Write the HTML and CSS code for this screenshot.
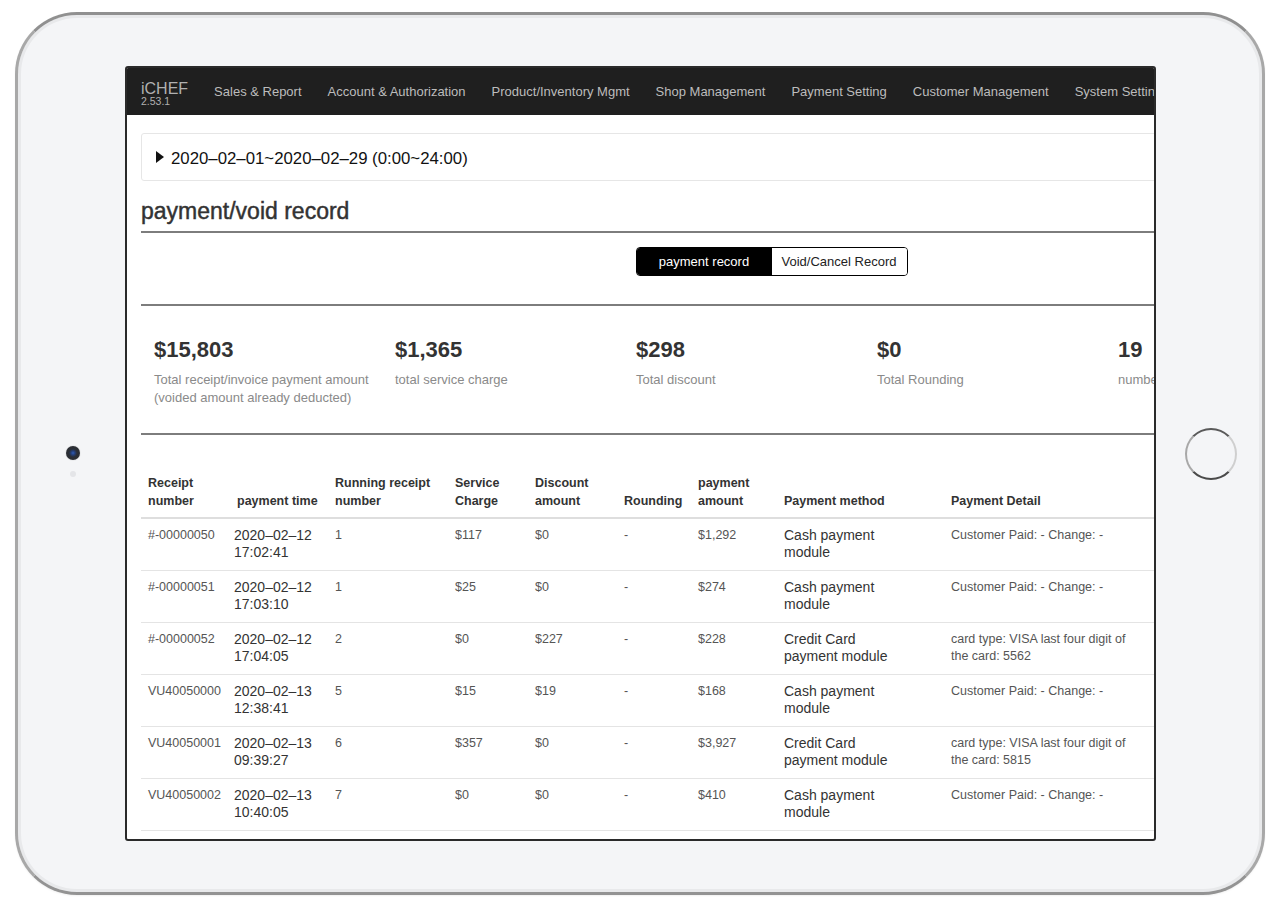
FILE: index.html
```html
<!DOCTYPE html>
<html lang="en">
<head>
<meta charset="utf-8">
<title>iCHEF - payment/void record</title>
<link rel="stylesheet" href="styles.css">
</head>
<body>
<div class="device">
  <div class="side side-left">
    <div class="camera"></div>
    <div class="sensor"></div>
  </div>
  <div class="screen">
    <nav class="topbar">
      <div class="brand"><span class="brand-name">iCHEF</span><span class="brand-ver">2.53.1</span></div>
      <span class="nav-item">Sales &amp; Report</span>
      <span class="nav-item">Account &amp; Authorization</span>
      <span class="nav-item">Product/Inventory Mgmt</span>
      <span class="nav-item">Shop Management</span>
      <span class="nav-item">Payment Setting</span>
      <span class="nav-item">Customer Management</span>
      <span class="nav-item">System Setting</span>
    </nav>
    <main class="page">
      <div class="date-box">
        <svg class="caret" width="8" height="12" viewBox="0 0 8 12"><polygon points="0,0 8,6 0,12" fill="#111"/></svg>
        <span class="date-text">2020–02–01~2020–02–29 (0:00~24:00)</span>
      </div>
      <h1 class="title">payment/void record</h1>
      <hr class="rule">
      <div class="seg-wrap">
        <div class="seg">
          <span class="seg-btn active">payment record</span>
          <span class="seg-btn">Void/Cancel Record</span>
        </div>
      </div>
      <hr class="rule rule-gap">
      <div class="stats">
        <div class="stat"><div class="stat-value">$15,803</div><div class="stat-label">Total receipt/invoice payment amount<br>(voided amount already deducted)</div></div>
        <div class="stat"><div class="stat-value">$1,365</div><div class="stat-label">total service charge</div></div>
        <div class="stat"><div class="stat-value">$298</div><div class="stat-label">Total discount</div></div>
        <div class="stat"><div class="stat-value">$0</div><div class="stat-label">Total Rounding</div></div>
        <div class="stat"><div class="stat-value">19</div><div class="stat-label">number of receipts</div></div>
      </div>
      <hr class="rule rule-stats">
      <table class="records">
        <colgroup>
          <col class="c1"><col class="c2"><col class="c3"><col class="c4"><col class="c5"><col class="c6"><col class="c7"><col class="c8"><col class="c9">
        </colgroup>
        <thead>
          <tr>
            <th>Receipt number</th>
            <th class="th-time">payment time</th>
            <th>Running receipt number</th>
            <th>Service Charge</th>
            <th>Discount amount</th>
            <th>Rounding</th>
            <th>payment amount</th>
            <th class="method">Payment method</th>
            <th class="detail">Payment Detail</th>
          </tr>
        </thead>
        <tbody>
          <tr><td>#-00000050</td><td class="time">2020–02–12 17:02:41</td><td>1</td><td>$117</td><td>$0</td><td>-</td><td>$1,292</td><td class="method">Cash payment module</td><td class="detail">Customer Paid: - Change: -</td></tr>
          <tr><td>#-00000051</td><td class="time">2020–02–12 17:03:10</td><td>1</td><td>$25</td><td>$0</td><td>-</td><td>$274</td><td class="method">Cash payment module</td><td class="detail">Customer Paid: - Change: -</td></tr>
          <tr><td>#-00000052</td><td class="time">2020–02–12 17:04:05</td><td>2</td><td>$0</td><td>$227</td><td>-</td><td>$228</td><td class="method">Credit Card payment module</td><td class="detail">card type: VISA last four digit of the card: 5562</td></tr>
          <tr><td>VU40050000</td><td class="time">2020–02–13 12:38:41</td><td>5</td><td>$15</td><td>$19</td><td>-</td><td>$168</td><td class="method">Cash payment module</td><td class="detail">Customer Paid: - Change: -</td></tr>
          <tr><td>VU40050001</td><td class="time">2020–02–13 09:39:27</td><td>6</td><td>$357</td><td>$0</td><td>-</td><td>$3,927</td><td class="method">Credit Card payment module</td><td class="detail">card type: VISA last four digit of the card: 5815</td></tr>
          <tr><td>VU40050002</td><td class="time">2020–02–13 10:40:05</td><td>7</td><td>$0</td><td>$0</td><td>-</td><td>$410</td><td class="method">Cash payment module</td><td class="detail">Customer Paid: - Change: -</td></tr>
          <tr><td>VU40050003</td><td class="time">2020–02–13 11:12:33</td><td>8</td><td>$42</td><td>$0</td><td>-</td><td>$462</td><td class="method">Cash payment module</td><td class="detail">Customer Paid: - Change: -</td></tr>
        </tbody>
      </table>
    </main>
  </div>
  <div class="side side-right">
    <div class="home"></div>
  </div>
</div>
</body>
</html>
```
FILE: styles.css
```css
* { box-sizing: border-box; }
html, body { margin: 0; padding: 0; background: #fff; }
body {
  font-family: "Liberation Sans", Arial, Helvetica, sans-serif;
  width: 1280px;
  height: 908px;
  overflow: hidden;
  padding: 12px 0 0 15px;
}

.device {
  width: 1250px;
  height: 883px;
  border: 3px solid #a8a8a8;
  border-top-color: #909090;
  border-bottom-color: #939393;
  border-radius: 62px;
  background: #f4f5f7;
  box-shadow: inset 0 0 0 3px #e8e9eb, 0 1px 2px rgba(0,0,0,0.06);
  display: flex;
  align-items: center;
}

.side {
  height: 100%;
  display: flex;
  flex-direction: column;
  align-items: center;
  justify-content: center;
}
.side-left { width: 107px; padding-left: 3px; padding-top: 16px; }
.side-right { width: 106px; padding-left: 4px; }

.camera {
  width: 14px;
  height: 14px;
  border-radius: 50%;
  background: radial-gradient(circle, #2f5cb5 0, #243e78 2px, #2a2e36 4px, #2b2d33 7px);
  box-shadow: 0 0 1px rgba(0,0,0,0.4);
}
.sensor {
  width: 6px;
  height: 6px;
  margin-top: 11px;
  border-radius: 50%;
  background: #e4e5e8;
}
.home {
  width: 52px;
  height: 52px;
  border-radius: 50%;
  border: 2px solid #777;
  border-color: #595959 #cfcfcf #4a4a4a #a8a8a8;
  background: #f4f5f7;
}

.screen {
  width: 1031px;
  height: 775px;
  border: 2px solid #2a2a2a;
  border-radius: 3px;
  background: #fff;
  overflow: hidden;
  flex: none;
}

.topbar {
  height: 47px;
  background: #1f1f1f;
  display: flex;
  align-items: center;
  gap: 26px;
  padding-left: 14px;
  white-space: nowrap;
  overflow: hidden;
}
.brand {
  display: flex;
  flex-direction: column;
  color: #b0b0b0;
  padding-top: 3px;
}
.brand-name { font-size: 16px; line-height: 15px; }
.brand-ver { font-size: 10.5px; line-height: 10px; }
.nav-item {
  font-size: 13px;
  color: #bcbcbc;
  flex: none;
}

.page {
  width: 1275px;
  padding: 18px 0 0 14px;
}

.date-box {
  height: 48px;
  border: 1px solid #e6e6e6;
  border-radius: 3px;
  display: flex;
  align-items: center;
  gap: 7px;
  padding-left: 14px;
  padding-top: 3px;
}
.caret { flex: none; margin-top: -3px; }
.date-text { font-size: 16.8px; color: #111; }

.title {
  margin: 18px 0 0;
  font-size: 23px;
  line-height: 24px;
  font-weight: normal;
  color: #333;
  -webkit-text-stroke: 0.45px #333;
}

.rule {
  border: none;
  border-top: 2px solid #7d7d7d;
  margin: 8px 0 0;
  height: 0;
}
.rule-gap { margin-top: 28px; }
.rule-stats { margin-top: 26px; }

.seg-wrap {
  display: flex;
  justify-content: center;
  margin-top: 14px;
}
.seg {
  display: flex;
  height: 29px;
  border: 1.5px solid #000;
  border-radius: 4px;
  overflow: hidden;
}
.seg-btn {
  width: 135px;
  display: flex;
  align-items: center;
  justify-content: center;
  font-size: 13px;
  color: #222;
  background: #fff;
}
.seg-btn.active { background: #000; color: #fff; }

.stats {
  display: grid;
  grid-template-columns: repeat(5, 241px);
  padding-left: 13px;
  margin-top: 31px;
}
.stat-value {
  font-size: 22px;
  line-height: 26px;
  font-weight: bold;
  color: #333;
}
.stat-label {
  margin-top: 8px;
  font-size: 13px;
  line-height: 18px;
  color: #8a8a8a;
}

.records {
  margin-top: 29px;
  border-collapse: collapse;
  table-layout: fixed;
  width: 1018px;
}
.c1 { width: 86px; }
.c2 { width: 101px; }
.c3 { width: 120px; }
.c4 { width: 80px; }
.c5 { width: 89px; }
.c6 { width: 74px; }
.c7 { width: 86px; }
.c8 { width: 167px; }
.c9 { width: 215px; }

.records th {
  font-size: 12.5px;
  line-height: 18px;
  font-weight: bold;
  color: #333;
  text-align: left;
  vertical-align: bottom;
  padding: 10px 7px 7px;
  border-bottom: 2px solid #dedede;
}
.records th.th-time { padding-left: 10px; }
.records td {
  font-size: 12.5px;
  line-height: 17px;
  color: #555;
  vertical-align: top;
  padding: 8px 7px 9px;
  border-bottom: 1px solid #e4e4e4;
  white-space: normal;
}
.records td.time { font-size: 14px; color: #333; }
.records td.method { font-size: 14px; color: #333; padding-right: 45px; }
.records td.detail { padding-right: 22px; }
```
